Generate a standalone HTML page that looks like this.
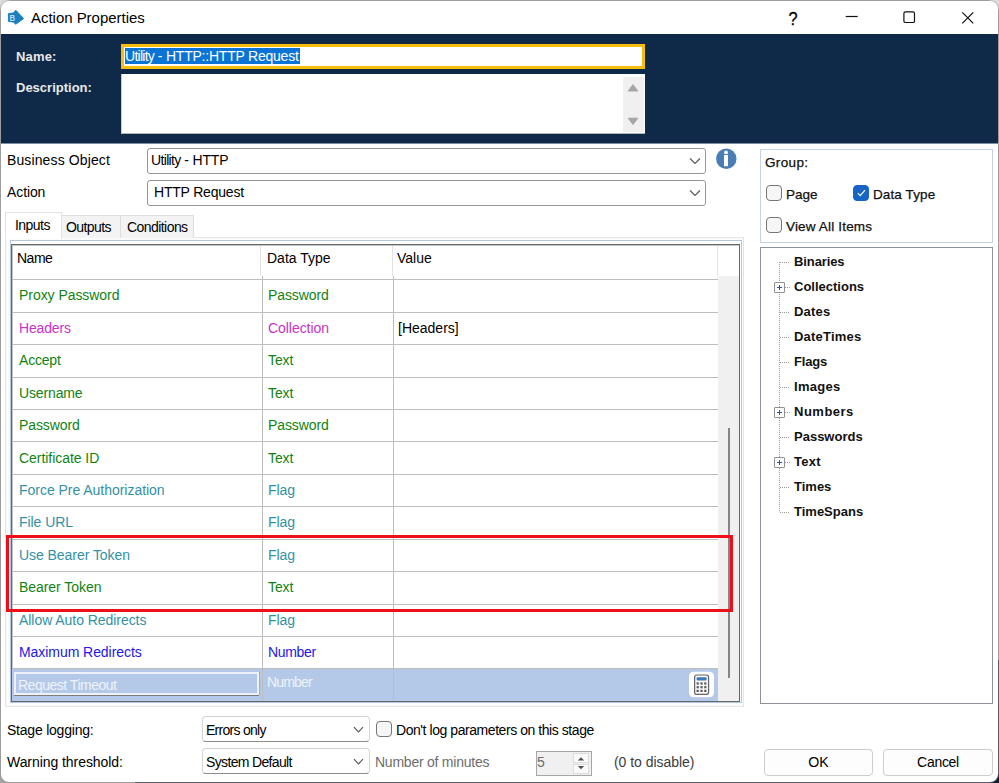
<!DOCTYPE html>
<html>
<head>
<meta charset="utf-8">
<title>Action Properties</title>
<style>
html,body{margin:0;padding:0;}
body{width:999px;height:783px;overflow:hidden;position:relative;font-family:"Liberation Sans",sans-serif;font-size:14px;color:#000;
 background:#a4a4a4;}
.bk{position:absolute;}
#win{position:absolute;left:1px;top:1px;width:997px;height:781px;background:#fff;border-radius:8px;box-shadow:0 0 0 1px rgba(150,150,150,.55);}
#ui{position:absolute;left:0;top:0;width:999px;height:783px;}
#ui *{position:absolute;box-sizing:border-box;white-space:nowrap;}
#ui span{position:static;}
.tx{font-size:14px;line-height:16px;}
.hl{color:#e8e8e8;font-size:13px;font-weight:bold;line-height:16px;}
.combo{height:26px;background:#fff;border:1px solid #959595;border-radius:3px;}
.tab{background:#f3f3f3;border:1px solid #dedede;border-bottom:none;}
.hline{left:12px;width:706px;height:1px;background:#bdbdbd;}
.vline{width:1px;background:#bdbdbd;top:276px;height:425px;}
.g{color:#118311;}.m{color:#c932c9;}.t{color:#3391a5;}.b{color:#2316ea;}
.chk{width:16px;height:16px;border:1px solid #757575;border-radius:4px;background:#f6f6f6;}
.seg{font-size:13.5px;line-height:16px;color:#111;-webkit-text-stroke:0.25px #111;}
.tree{font-weight:bold;font-size:13px;line-height:16px;left:794px;color:#111;}
.dot{height:1px;background:repeating-linear-gradient(to right,#9a9a9a 0,#9a9a9a 1px,transparent 1px,transparent 2px);}
.plus{width:11px;height:11px;border:1px solid #919191;background:#fff;left:774px;border-radius:1px;}
.plus:before{content:"";position:absolute;left:2px;top:4px;width:5px;height:1px;background:#2b4fb5;}
.plus:after{content:"";position:absolute;left:4px;top:2px;width:1px;height:5px;background:#2b4fb5;}
.btn{height:27px;border:1px solid #cdcdcd;border-radius:4px;background:#fdfdfd;}
</style>
</head>
<body>
<div class="bk" style="left:0;top:0;width:10px;height:10px;background:#dcdcdc"></div>
<div class="bk" style="left:989px;top:0;width:10px;height:10px;background:#dcdcdc"></div>
<div class="bk" style="left:135px;top:660px;width:864px;height:123px;background:#0d1d32"></div>
<div id="win"></div>
<div id="ui">
  <!-- title bar -->
  <svg style="left:7px;top:9px" width="18" height="17" viewBox="0 0 18 17"><path d="M1.4 4.6 L6.4 4 L8.8 1.2 L16.6 9.6 L8.8 15.2 L6.2 13 L1.4 12.4 Z" fill="#1b7fc4" stroke="#1b7fc4" stroke-width="1" stroke-linejoin="round"/><text x="2.6" y="12.2" font-family="Liberation Sans, sans-serif" font-size="9.4" font-weight="bold" fill="#c4def3" transform="translate(2.6 0) scale(0.82 1) translate(-2.6 0)">B</text></svg>
  <div style="left:31px;top:8px;font-size:15px;line-height:20px;letter-spacing:-0.03px">Action Properties</div>
  <div style="left:787px;top:9px;width:12px;text-align:center;font-size:19px;line-height:20px;-webkit-text-stroke:0.3px #000;transform:scaleX(.86)">?</div>
  <svg style="left:844px;top:10px" width="16" height="14"><path d="M1.7 6.5H13.7" stroke="#111" stroke-width="1.2"/></svg>
  <svg style="left:902px;top:10px" width="16" height="16"><rect x="1.9" y="1.9" width="10.6" height="10.6" rx="1.6" fill="none" stroke="#111" stroke-width="1.2"/></svg>
  <svg style="left:960px;top:10px" width="16" height="16"><path d="M2.3 2.3L13.3 13.3M13.3 2.3L2.3 13.3" stroke="#111" stroke-width="1.2" fill="none"/></svg>

  <!-- dark header -->
  <div style="left:1px;top:34px;width:997px;height:109px;background:#0f2948"></div>
  <div style="left:1px;top:143px;width:997px;height:1px;background:#7f8c9d"></div>
  <div class="hl" style="left:16px;top:49px;letter-spacing:0.17px">Name:</div>
  <div class="hl" style="left:16px;top:80px">Description:</div>
  <div style="left:121px;top:44px;width:524px;height:25px;background:#fff;border:3px solid #f7bc0c"></div>
  <div style="left:125px;top:48px;height:16px;width:175px;background:#0a74d6"></div>
  <div class="tx" style="left:125px;top:48px;color:#fff;letter-spacing:-0.22px"><span style="letter-spacing:-0.73px">Utility</span> - HTTP::HTTP Request</div>
  <div style="left:121px;top:74px;width:524px;height:60px;background:#fff;border-left:1px solid #c9c9c9;border-bottom:1px solid #b4b4b4"></div>
  <div style="left:623px;top:77px;width:21px;height:55px;background:#f0f0f0"></div>
  <svg style="left:627px;top:83px" width="12" height="9"><path d="M1.2 8L6 1.6L10.8 8Z" fill="#a6a6a6" stroke="#a6a6a6" stroke-width="1" stroke-linejoin="round"/></svg>
  <svg style="left:627px;top:117px" width="12" height="9"><path d="M1.2 1.2L6 7.6L10.8 1.2Z" fill="#a6a6a6" stroke="#a6a6a6" stroke-width="1" stroke-linejoin="round"/></svg>

  <!-- business object / action -->
  <div class="tx" style="left:7px;top:152px;letter-spacing:0.12px">Business Object</div>
  <div class="combo" style="left:147px;top:148px;width:559px"></div>
  <div class="tx" style="left:151px;top:152px;letter-spacing:-0.2px"><span style="letter-spacing:-0.65px">Utility</span> - HTTP</div>
  <svg style="left:689px;top:157px" width="12" height="8"><path d="M1 1.5L6 6.5L11 1.5" fill="none" stroke="#5a5a5a" stroke-width="1.2"/></svg>
  <svg style="left:716px;top:148px" width="21" height="21" viewBox="0 0 21 21"><circle cx="10.3" cy="10.8" r="10.2" fill="#4a7db6"/><circle cx="10" cy="4.4" r="1.9" fill="#fff"/><rect x="8" y="7" width="4" height="11.2" fill="#fff"/></svg>
  <div class="tx" style="left:7px;top:184px;letter-spacing:-0.1px">Action</div>
  <div class="combo" style="left:147px;top:180px;width:559px"></div>
  <div class="tx" style="left:154px;top:184px;letter-spacing:-0.2px">HTTP Request</div>
  <svg style="left:689px;top:189px" width="12" height="8"><path d="M1 1.5L6 6.5L11 1.5" fill="none" stroke="#5a5a5a" stroke-width="1.2"/></svg>

  <!-- tab panel -->
  <div style="left:5px;top:237px;width:739px;height:470px;border:1px solid #e4e4e4;background:#fbfbfb"></div>
  <div style="left:10px;top:240px;width:732px;height:463px;border:1px solid #b4c6e2;background:#fff"></div>
  <div class="tab" style="left:61px;top:215px;width:60px;height:23px"></div>
  <div class="tab" style="left:120px;top:215px;width:74px;height:23px"></div>
  <div class="tab" style="left:5px;top:212px;width:57px;height:27px;background:#fff;border-color:#e2e2e2"></div>
  <div class="tx" style="left:15px;top:217px;letter-spacing:-0.55px">Inputs</div>
  <div class="tx" style="left:66px;top:219px;letter-spacing:-0.6px">Outputs</div>
  <div class="tx" style="left:127px;top:219px;letter-spacing:-0.56px">Conditions</div>

  <!-- grid -->
  <div style="left:11px;top:244px;width:729px;height:458px;background:#fff;border:1px solid #64686c;box-shadow:inset 1px 1px 0 #c4c4c4"></div>
  <div style="left:718px;top:276px;width:21px;height:425px;background:#f0f0f0"></div>
  <div style="left:728px;top:428px;width:2px;height:250px;background:#858585"></div>
  <div style="left:260px;top:246px;width:1px;height:30px;background:#e2e2e2"></div>
  <div style="left:392px;top:246px;width:1px;height:30px;background:#e2e2e2"></div>
  <div style="left:717px;top:246px;width:1px;height:30px;background:#e2e2e2"></div>
  <div style="left:12px;top:669px;width:706px;height:32px;background:#b4c9e8"></div>
  <div class="vline" style="left:262px"></div>
  <div class="vline" style="left:393px"></div>
  <div class="tx" style="left:17px;top:250px;letter-spacing:-0.5px">Name</div>
  <div class="tx" style="left:267px;top:250px">Data Type</div>
  <div class="tx" style="left:397px;top:250px">Value</div>
  <!-- selected row -->
  <div style="left:14px;top:672px;width:245px;height:23px;border:2px solid #edf2fa;box-shadow:0 1px 0 #7d7d7d,1px 0 0 #a3adbf"></div>
  <div class="tx g" style="left:19px;top:287px;letter-spacing:-0.05px">Proxy Password</div>
  <div class="tx g" style="left:268px;top:287px;letter-spacing:-0.1px">Password</div>
  <div class="tx m" style="left:19px;top:320px;letter-spacing:-0.15px">Headers</div>
  <div class="tx m" style="left:268px;top:320px;letter-spacing:-0.05px">Collection</div>
  <div class="tx" style="left:398px;top:320px">[Headers]</div>
  <div class="tx g" style="left:19px;top:352px;letter-spacing:-0.2px">Accept</div>
  <div class="tx g" style="left:268px;top:352px;letter-spacing:-0.1px">Text</div>
  <div class="tx g" style="left:19px;top:385px;letter-spacing:-0.14px">Username</div>
  <div class="tx g" style="left:268px;top:385px;letter-spacing:-0.1px">Text</div>
  <div class="tx g" style="left:19px;top:417px;letter-spacing:-0.1px">Password</div>
  <div class="tx g" style="left:268px;top:417px;letter-spacing:-0.1px">Password</div>
  <div class="tx g" style="left:19px;top:450px;letter-spacing:-0.05px">Certificate ID</div>
  <div class="tx g" style="left:268px;top:450px;letter-spacing:-0.1px">Text</div>
  <div class="tx t" style="left:19px;top:482px;letter-spacing:-0.03px">Force Pre Authorization</div>
  <div class="tx t" style="left:268px;top:482px;letter-spacing:-0.1px">Flag</div>
  <div class="tx t" style="left:19px;top:514px;letter-spacing:-0.05px">File URL</div>
  <div class="tx t" style="left:268px;top:514px;letter-spacing:-0.1px">Flag</div>
  <div class="tx t" style="left:19px;top:547px;letter-spacing:-0.05px">Use Bearer Token</div>
  <div class="tx t" style="left:268px;top:547px;letter-spacing:-0.1px">Flag</div>
  <div class="tx g" style="left:19px;top:579px;letter-spacing:-0.05px">Bearer Token</div>
  <div class="tx g" style="left:268px;top:579px;letter-spacing:-0.1px">Text</div>
  <div class="tx t" style="left:19px;top:612px;letter-spacing:-0.05px">Allow Auto Redirects</div>
  <div class="tx t" style="left:268px;top:612px;letter-spacing:-0.1px">Flag</div>
  <div class="tx b" style="left:19px;top:644px;letter-spacing:-0.06px">Maximum Redirects</div>
  <div class="tx b" style="left:268px;top:644px;letter-spacing:-0.35px">Number</div>
  <div class="hline" style="top:279px"></div>
  <div class="hline" style="top:312px"></div>
  <div class="hline" style="top:344px"></div>
  <div class="hline" style="top:377px"></div>
  <div class="hline" style="top:409px"></div>
  <div class="hline" style="top:441px"></div>
  <div class="hline" style="top:474px"></div>
  <div class="hline" style="top:506px"></div>
  <div class="hline" style="top:539px"></div>
  <div class="hline" style="top:571px"></div>
  <div class="hline" style="top:604px"></div>
  <div class="hline" style="top:636px"></div>
  <div class="hline" style="top:668px"></div>
  <div class="tx" style="left:18px;top:677px;color:#eef3fb;letter-spacing:-0.49px">Request Timeout</div>
  <div class="tx" style="left:267px;top:674px;color:#eef3fb;letter-spacing:-0.85px">Number</div>
  <svg style="left:688px;top:671px" width="27" height="28" viewBox="0 0 27 28"><rect x="1" y="1.2" width="25" height="25.4" rx="4.5" fill="#d3d9e2"/><rect x="1" y=".7" width="25" height="25.4" rx="4.5" fill="#fff"/><rect x="6.6" y="4" width="14" height="19.4" rx="2.2" fill="#f7f7f7" stroke="#666" stroke-width="1.2"/><rect x="8.6" y="6.2" width="10" height="3.2" rx="1" fill="#3c78c0"/><g fill="#5a5a5a"><rect x="8.6" y="11.4" width="2.2" height="2.2"/><rect x="12.4" y="11.4" width="2.2" height="2.2"/><rect x="16.2" y="11.4" width="2.2" height="2.2"/><rect x="8.6" y="15.1" width="2.2" height="2.2"/><rect x="12.4" y="15.1" width="2.2" height="2.2"/><rect x="16.2" y="15.1" width="2.2" height="2.2"/><rect x="8.6" y="18.8" width="2.2" height="2.2"/><rect x="12.4" y="18.8" width="2.2" height="2.2"/><rect x="16.2" y="18.8" width="2.2" height="2.2"/></g></svg>
  <!-- red highlight -->
  <div style="left:6px;top:535px;width:727px;height:77px;border:3px solid #ee1018"></div>

  <!-- bottom controls -->
  <div class="tx" style="left:7px;top:722px;letter-spacing:-0.22px">Stage logging:</div>
  <div class="combo" style="left:202px;top:716px;width:168px;height:26px;border-color:#d4d4d4 #d4d4d4 #8c8c8c #d4d4d4;border-radius:4px"></div>
  <div class="tx" style="left:206px;top:722px;letter-spacing:-0.72px">Errors only</div>
  <svg style="left:353px;top:726px" width="11" height="8"><path d="M1 1.2L5.5 5.8L10 1.2" fill="none" stroke="#5a5a5a" stroke-width="1.2"/></svg>
  <div class="chk" style="left:376px;top:721px"></div>
  <div class="tx" style="left:396px;top:722px;letter-spacing:-0.44px">Don't log parameters on this stage</div>
  <div class="tx" style="left:7px;top:754px;letter-spacing:-0.06px">Warning threshold:</div>
  <div class="combo" style="left:202px;top:748px;width:168px;height:26px;border-color:#d4d4d4 #d4d4d4 #8c8c8c #d4d4d4;border-radius:4px"></div>
  <div class="tx" style="left:206px;top:754px;letter-spacing:-0.65px">System Default</div>
  <svg style="left:353px;top:758px" width="11" height="8"><path d="M1 1.2L5.5 5.8L10 1.2" fill="none" stroke="#5a5a5a" stroke-width="1.2"/></svg>
  <div class="tx" style="left:375px;top:754px;color:#6d6d6d;letter-spacing:-0.24px">Number of minutes</div>
  <div style="left:536px;top:751px;width:56px;height:25px;border:1px solid #a6a6a6;background:#f0f0f0"></div>
  <div style="left:573px;top:753px;width:16px;height:10px;background:#fafafa;border:1px solid #dcdcdc"></div>
  <div style="left:573px;top:764px;width:16px;height:10px;background:#fafafa;border:1px solid #dcdcdc"></div>
  <svg style="left:577px;top:756px" width="8" height="15"><path d="M0.8 4.6L4 1.2L7.2 4.6Z M0.8 9.9L4 13.3L7.2 9.9Z" fill="#505050"/></svg>
  <div class="tx" style="left:537px;top:754px;color:#6d6d6d">5</div>
  <div class="tx" style="left:614px;top:754px;color:#3c3c3c;letter-spacing:-0.04px">(0 to disable)</div>

  <!-- right side -->
  <div style="left:760px;top:149px;width:233px;height:94px;border:1px solid #c3d2e8;background:#fff"></div>
  <div class="seg" style="left:765px;top:155px;letter-spacing:0.36px">Group:</div>
  <div class="chk" style="left:766px;top:185px"></div>
  <div class="seg" style="left:786px;top:187px">Page</div>
  <div class="chk" style="left:853px;top:185px;background:#1664c4;border-color:#1664c4"><svg style="left:0;top:0" width="14" height="14"><path d="M3.9 7.2L6.2 9.6L11 4.2" fill="none" stroke="#fff" stroke-width="1.2"/></svg></div>
  <div class="seg" style="left:873px;top:187px;letter-spacing:0.11px">Data Type</div>
  <div class="chk" style="left:766px;top:217px"></div>
  <div class="seg" style="left:786px;top:219px;letter-spacing:0.17px">View All Items</div>

  <div style="left:760px;top:247px;width:233px;height:457px;border:1px solid #8e929c;background:#fff"></div>
  <div style="left:779px;top:262px;width:1px;height:249px;background:repeating-linear-gradient(to bottom,#9a9a9a 0,#9a9a9a 1px,transparent 1px,transparent 2px)"></div>
  <div class="tree" style="top:254px;letter-spacing:-0.1px">Binaries</div>
  <div class="dot" style="left:780px;top:262px;width:10px"></div>
  <div class="tree" style="top:279px;letter-spacing:0px">Collections</div>
  <div class="dot" style="left:785px;top:287px;width:5px"></div>
  <div class="plus" style="top:282px"></div>
  <div class="tree" style="top:304px;letter-spacing:0.2px">Dates</div>
  <div class="dot" style="left:780px;top:312px;width:10px"></div>
  <div class="tree" style="top:329px;letter-spacing:0.2px">DateTimes</div>
  <div class="dot" style="left:780px;top:337px;width:10px"></div>
  <div class="tree" style="top:354px;letter-spacing:-0.2px">Flags</div>
  <div class="dot" style="left:780px;top:362px;width:10px"></div>
  <div class="tree" style="top:379px;letter-spacing:0.3px">Images</div>
  <div class="dot" style="left:780px;top:387px;width:10px"></div>
  <div class="tree" style="top:404px;letter-spacing:0.5px">Numbers</div>
  <div class="dot" style="left:785px;top:412px;width:5px"></div>
  <div class="plus" style="top:407px"></div>
  <div class="tree" style="top:429px;letter-spacing:0px">Passwords</div>
  <div class="dot" style="left:780px;top:437px;width:10px"></div>
  <div class="tree" style="top:454px;letter-spacing:0.25px">Text</div>
  <div class="dot" style="left:785px;top:462px;width:5px"></div>
  <div class="plus" style="top:457px"></div>
  <div class="tree" style="top:479px;letter-spacing:0px">Times</div>
  <div class="dot" style="left:780px;top:487px;width:10px"></div>
  <div class="tree" style="top:504px;letter-spacing:0px">TimeSpans</div>
  <div class="dot" style="left:780px;top:512px;width:10px"></div>

  <div class="btn" style="left:764px;top:749px;width:109px"></div>
  <div class="tx" style="left:764px;top:754px;width:109px;text-align:center;font-size:14.2px">OK</div>
  <div class="btn" style="left:883px;top:749px;width:110px"></div>
  <div class="tx" style="left:883px;top:754px;width:110px;text-align:center;letter-spacing:-0.3px">Cancel</div>
</div>
</body>
</html>
